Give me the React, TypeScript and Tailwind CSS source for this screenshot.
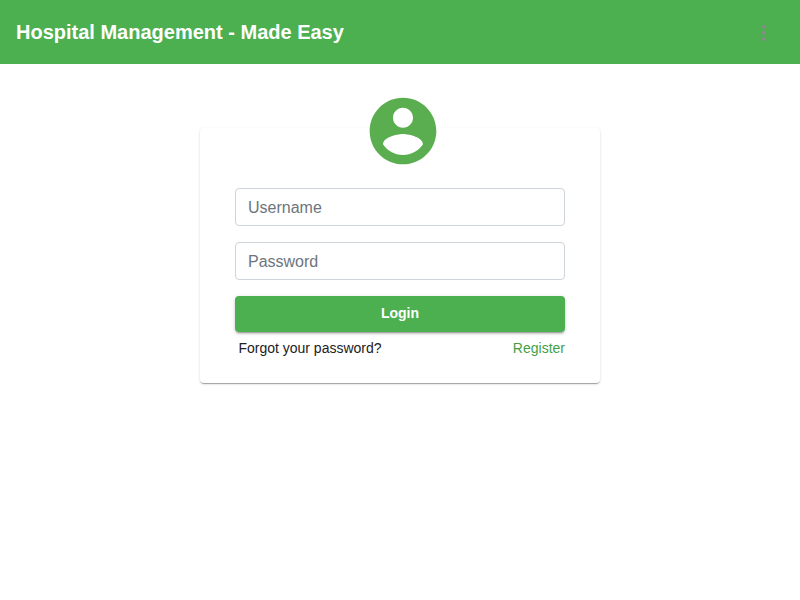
import React from "react";

function Field({ label, type }: { label: string; type: string }) {
  return (
    <input
      type={type}
      placeholder={label}
      aria-label={label}
      className="block h-[38px] w-full rounded border border-[#ced4da] bg-white pt-0.5 pr-3 pl-[11.6px] text-base text-[#495057] outline-none placeholder:text-[#6c757d]"
    />
  );
}

function MenuButton() {
  return (
    <button aria-label="Menu" className="mt-0.5 mr-1 p-2 text-[#8a8a8a]">
      <svg viewBox="0 0 24 24" className="size-6" fill="currentColor">
        <path d="M12 8c1.1 0 2-.9 2-2s-.9-2-2-2-2 .9-2 2 .9 2 2 2zm0 2c-1.1 0-2 .9-2 2s.9 2 2 2 2-.9 2-2-.9-2-2-2zm0 6c-1.1 0-2 .9-2 2s.9 2 2 2 2-.9 2-2-.9-2-2-2z" />
      </svg>
    </button>
  );
}

function Avatar() {
  return (
    <svg viewBox="0 0 24 24" className="absolute -top-[37px] left-[163px] size-20" fill="#5bae50">
      <circle cx="12" cy="12" r="9" fill="#ffffff" />
      <path d="M12 2C6.48 2 2 6.48 2 12s4.48 10 10 10 10-4.48 10-10S17.52 2 12 2zm0 3c1.66 0 3 1.34 3 3s-1.34 3-3 3-3-1.34-3-3 1.34-3 3-3zm0 14.2c-2.5 0-4.71-1.28-6-3.22.03-1.99 4-3.08 6-3.08 1.99 0 5.97 1.09 6 3.08-1.29 1.94-3.5 3.22-6 3.22z" />
    </svg>
  );
}

export default function App() {
  return (
    <div className="min-h-screen bg-white font-['Liberation_Sans',Arial,sans-serif]">
      <header className="flex h-16 items-center justify-between bg-[#4caf50] pr-3 pl-4">
        <h1 className="text-xl font-bold text-white">Hospital Management - Made Easy</h1>
        <MenuButton />
      </header>
      <main className="flex justify-center pt-16">
        <form className="relative h-[254.5px] w-[400px] rounded bg-white pt-[60px] pr-[35px] pl-[35.4px] shadow-[0_2px_1px_-1px_rgba(0,0,0,0.2),0_1px_1px_0_rgba(0,0,0,0.14),0_1px_3px_0_rgba(0,0,0,0.12)]">
          <Avatar />
          <div className="flex flex-col gap-4">
            <Field label="Username" type="text" />
            <Field label="Password" type="password" />
            <button
              type="button"
              className="h-9 w-full rounded bg-[#4caf50] pr-[0.4px] pb-0.5 text-sm font-bold text-white shadow-[0_3px_1px_-2px_rgba(0,0,0,0.2),0_2px_2px_0_rgba(0,0,0,0.14),0_1px_5px_0_rgba(0,0,0,0.12)]"
            >
              Login
            </button>
          </div>
          <div className="mt-1.5 flex justify-between pl-[3px] text-sm leading-5">
            <a className="text-[#212121]">Forgot your password?</a>
            <a className="text-[#43a047]">Register</a>
          </div>
        </form>
      </main>
    </div>
  );
}
